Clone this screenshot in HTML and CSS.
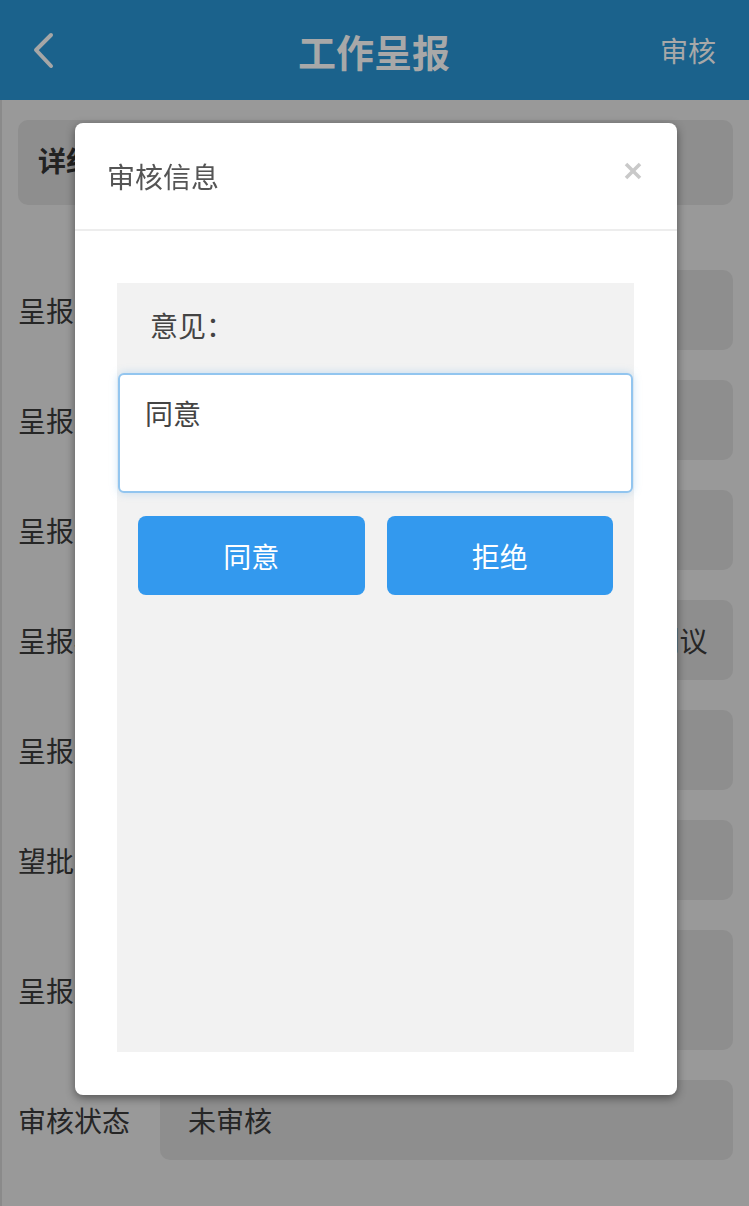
FILE: index.html
```html
<!DOCTYPE html>
<html lang="zh-CN">
<head>
    <meta charset="UTF-8">
    <meta name="viewport" content="width=device-width, initial-scale=1.0">
    <title>工作呈报</title>
    <link rel="stylesheet" href="styles.css">
</head>
<body>
    <!-- 顶部导航 -->
    <div class="header">
        <a class="back" href="#">
            <svg width="24" height="40" viewBox="0 0 24 40">
                <polyline points="19,5 4,20 19,36" fill="none" stroke="#a6a6a6" stroke-width="4" stroke-linecap="round" stroke-linejoin="round"/>
            </svg>
        </a>
        <h1>工作呈报</h1>
        <a class="header-action" href="#">审核</a>
    </div>

    <!-- 呈报详情 -->
    <div class="content">
        <div class="detail-title">详细信息</div>

        <div class="form-row">
            <div class="form-label">呈报人</div>
            <div class="form-value">张明</div>
        </div>
        <div class="form-row">
            <div class="form-label">呈报部门</div>
            <div class="form-value">综合办公室</div>
        </div>
        <div class="form-row">
            <div class="form-label">呈报时间</div>
            <div class="form-value">2018-05-16</div>
        </div>
        <div class="form-row">
            <div class="form-label">呈报标题</div>
            <div class="form-value">关于第2季度重点项目推进工作安排计划议</div>
        </div>
        <div class="form-row">
            <div class="form-label">呈报类型</div>
            <div class="form-value">工作请示</div>
        </div>
        <div class="form-row">
            <div class="form-label">望批时间</div>
            <div class="form-value">2018-05-20</div>
        </div>
        <div class="form-row form-row-tall">
            <div class="form-label">呈报内容</div>
            <div class="form-value">请领导审阅。</div>
        </div>
        <div class="form-row">
            <div class="form-label">审核状态</div>
            <div class="form-value">未审核</div>
        </div>
    </div>

    <!-- 审核弹窗 -->
    <div class="modal">
        <div class="modal-header">
            <span class="modal-title">审核信息</span>
            <a class="modal-close" href="#">
                <svg width="20" height="20" viewBox="0 0 20 20">
                    <line x1="3" y1="3" x2="17" y2="17" stroke="#c9c9c9" stroke-width="3.5"/>
                    <line x1="17" y1="3" x2="3" y2="17" stroke="#c9c9c9" stroke-width="3.5"/>
                </svg>
            </a>
        </div>
        <div class="modal-body">
            <div class="review-panel">
                <div class="review-label">意见：</div>
                <textarea class="review-input" readonly>同意</textarea>
                <div class="review-actions">
                    <button class="btn">同意</button>
                    <button class="btn">拒绝</button>
                </div>
            </div>
        </div>
    </div>
</body>
</html>
```

FILE: styles.css
```css
* {
    box-sizing: border-box;
}
body {
    margin: 0;
    width: 749px;
    height: 1206px;
    overflow: hidden;
    font-family: "Liberation Sans", "Noto Sans CJK SC", sans-serif;
    font-size: 28px;
    background-color: #999999;
    color: #262626;
}
.header {
    height: 100px;
    background-color: #1b628c;
    display: flex;
    align-items: center;
    justify-content: space-between;
    padding: 0 33px 0 32px;
}
.back {
    display: flex;
    width: 90px;
}
.header h1 {
    margin: 0;
    font-size: 38px;
    font-weight: 700;
    color: #a8a8a8;
}
.header-action {
    width: 90px;
    text-align: right;
    color: #a8a8a8;
    text-decoration: none;
    font-size: 28px;
}
.content {
    padding: 20px 16px 0 16px;
    border-left: 2px solid #8a8a8a;
    height: 1106px;
}
.detail-title {
    height: 85px;
    line-height: 85px;
    background-color: #8e8e8e;
    border-radius: 10px;
    padding-left: 20px;
    font-weight: 700;
    color: #222222;
    margin-bottom: 65px;
}
.form-row {
    display: flex;
    align-items: center;
    height: 80px;
    margin-bottom: 30px;
}
.form-row-tall {
    height: 120px;
}
.form-label {
    width: 142px;
    flex-shrink: 0;
}
.form-value {
    flex: 1;
    height: 100%;
    display: flex;
    align-items: center;
    padding-left: 28px;
    background-color: #8e8e8e;
    border-radius: 10px;
    white-space: nowrap;
    overflow: hidden;
}
.modal {
    position: fixed;
    left: 75px;
    top: 123px;
    width: 602px;
    height: 972px;
    background-color: #ffffff;
    border-radius: 8px;
    box-shadow: 0 3px 10px rgba(0, 0, 0, 0.45);
    display: flex;
    flex-direction: column;
}
.modal-header {
    height: 108px;
    display: flex;
    align-items: center;
    justify-content: space-between;
    padding: 0 34px 0 32px;
    border-bottom: 2px solid #ededed;
}
.modal-title {
    color: #555555;
}
.modal-close {
    display: flex;
    margin-top: -10px;
}
.modal-body {
    flex: 1;
    padding: 52px 43px 43px 42px;
    display: flex;
}
.review-panel {
    flex: 1;
    background-color: #f2f2f2;
    display: flex;
    flex-direction: column;
}
.review-label {
    height: 90px;
    line-height: 90px;
    padding-left: 33px;
    color: #444444;
}
.review-input {
    margin: 0 1px;
    height: 120px;
    border: 2px solid #92c5ef;
    border-radius: 6px;
    box-shadow: 0 0 8px rgba(102, 175, 233, 0.35);
    padding: 18px 25px;
    font-family: inherit;
    font-size: 28px;
    color: #444444;
    resize: none;
    outline: none;
    background-color: #ffffff;
}
.review-actions {
    display: flex;
    gap: 22px;
    padding: 0 21px;
    margin-top: 23px;
}
.btn {
    flex: 1;
    height: 79px;
    border: none;
    border-radius: 8px;
    background-color: #3399ee;
    color: #ffffff;
    font-family: inherit;
    font-size: 28px;
}
```
